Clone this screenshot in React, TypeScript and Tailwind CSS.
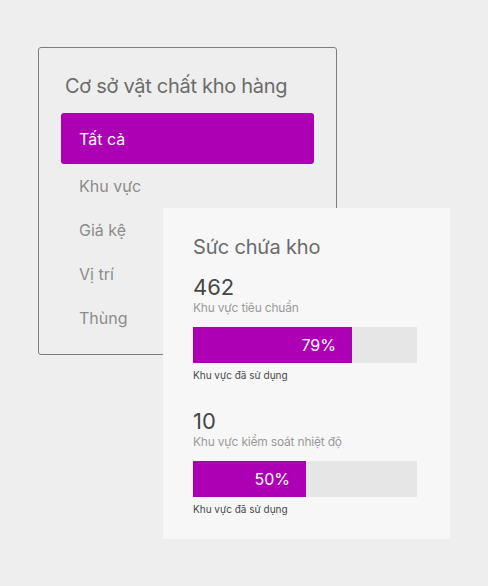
const menu = ["Khu vực", "Giá kệ", "Vị trí", "Thùng"];

const zones = [
  { count: "462", name: "Khu vực tiêu chuẩn", pct: "79%", fill: 159 },
  { count: "10", name: "Khu vực kiểm soát nhiệt độ", pct: "50%", fill: 113 },
];

function Facilities() {
  return (
    <div className="absolute left-[38px] top-[47px] w-[299px] h-[308px] rounded-[3px] border border-[#7d7d7d] px-[22px] pt-[24px]">
      <h2 className="pl-[4px] text-[20px] leading-[28px] tracking-[-0.3px] text-[#6b6b6b]">Cơ sở vật chất kho hàng</h2>
      <ul className="mt-[13px] w-[253px]">
        <li className="flex h-[51px] items-center rounded-[3px] bg-[#ad00b4] pl-[18px] text-[16px] text-white">
          Tất cả
        </li>
        {menu.map((m) => (
          <li key={m} className="flex h-[44px] items-center pl-[18px] text-[16px] text-[#8c8c8c]">
            {m}
          </li>
        ))}
      </ul>
    </div>
  );
}

function Capacity() {
  return (
    <div className="absolute left-[163px] top-[208px] w-[287px] h-[331px] bg-[#f7f7f7] px-[30px] pt-[25px]">
      <h2 className="text-[20px] leading-[28px] tracking-[-0.2px] text-[#6b6b6b]">Sức chứa kho</h2>
      <div className="mt-[13px] flex flex-col gap-[26px]">
        {zones.map((z) => (
          <div key={z.count}>
            <div className="text-[22px] leading-[26px] text-[#474747]">{z.count}</div>
            <div className="text-[12px] leading-[16px] tracking-[-0.2px] text-[#9a9a9a]">{z.name}</div>
            <div className="mt-[11px] flex h-[36px] w-[224px] bg-[#e6e6e6]">
              <div
                className="flex h-full items-center justify-end bg-[#ad00b4] pr-[16px] text-[16px] text-white"
                style={{ width: z.fill }}
              >
                {z.pct}
              </div>
            </div>
            <div className="mt-[5px] text-[10px] leading-[14px] text-[#474747]">Khu vực đã sử dụng</div>
          </div>
        ))}
      </div>
    </div>
  );
}

export default function App() {
  return (
    <div className="relative h-[586px] w-[488px] overflow-hidden bg-[#eeeeee] font-['Inter','Noto_Sans',sans-serif]">
      <Facilities />
      <Capacity />
    </div>
  );
}
